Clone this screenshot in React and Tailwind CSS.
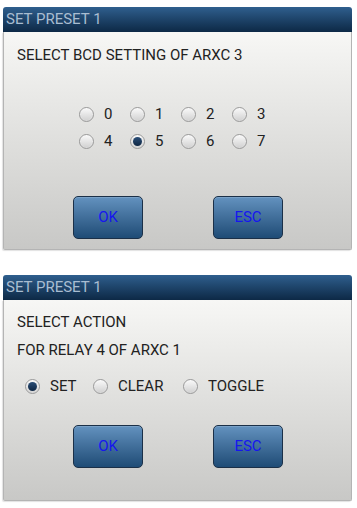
import React from "react";

const font = { fontFamily: "Roboto, 'Liberation Sans', sans-serif" };

function Radio({ checked }) {
  return (
    <span className="relative flex h-[15px] w-[15px] shrink-0 items-center justify-center rounded-full border border-[#999] bg-gradient-to-b from-[#fafafa] to-[#d0d0d0] shadow-[inset_0_0_1px_#ffffff]">
      {checked ? (
        <span className="h-[9px] w-[9px] rounded-full bg-gradient-to-b from-[#2b4f78] to-[#0f2744]" />
      ) : null}
    </span>
  );
}

function Opt({ label, checked }) {
  return (
    <div className="flex items-center gap-[10px]">
      <Radio checked={checked} />
      <span className="text-[15px] leading-none text-[#222]">{label}</span>
    </div>
  );
}

function Btn({ children }) {
  return (
    <div className="flex h-[43px] w-[70px] items-center justify-center rounded-[5px] border border-[#1b3048] bg-gradient-to-b from-[#6392bf] to-[#1f4c76] text-[15px] text-[#1616ee] shadow-[inset_0_1px_0_rgba(255,255,255,0.15)]">
      {children}
    </div>
  );
}

function Title() {
  return (
    <div className="flex h-[25px] items-center rounded-t-[3px] bg-gradient-to-b from-[#2f5f8e] to-[#0d2946] pl-[3px] text-[15px] text-[#a9bdd1]">
      SET PRESET 1
    </div>
  );
}

export default function App() {
  return (
    <div className="h-[508px] w-[357px] bg-white px-[3px] pt-[7px]" style={font}>
      <div className="w-[349px]">
        <Title />
        <div className="flex h-[218px] flex-col rounded-b-[2px] border border-t-0 border-[#b4b4b4] bg-gradient-to-b from-[#f7f7f5] to-[#c8c8c6] shadow-[-1px_1px_1px_rgba(0,0,0,0.12)]">
          <div className="mt-[14px] pl-[13px] text-[15px] leading-[18px] text-[#222]">
            SELECT BCD SETTING OF ARXC 3
          </div>
          <div className="ml-[75px] mt-[37px] grid grid-cols-[51px_51px_51px_51px] grid-rows-[27px_27px] items-center">
            <Opt label="0" />
            <Opt label="1" />
            <Opt label="2" />
            <Opt label="3" />
            <Opt label="4" />
            <Opt label="5" checked />
            <Opt label="6" />
            <Opt label="7" />
          </div>
          <div className="ml-[69px] mt-[41px] flex gap-[70px]">
            <Btn>OK</Btn>
            <Btn>ESC</Btn>
          </div>
        </div>
      </div>

      <div className="mt-[25px] w-[349px]">
        <Title />
        <div className="flex h-[201px] flex-col rounded-b-[2px] border border-t-0 border-[#b4b4b4] bg-gradient-to-b from-[#f7f7f5] to-[#c8c8c6] shadow-[-1px_1px_1px_rgba(0,0,0,0.12)]">
          <div className="mt-[13px] pl-[13px] text-[15px] leading-[18px] text-[#222]">
            SELECT ACTION
          </div>
          <div className="mt-[10px] pl-[13px] text-[15px] leading-[18px] text-[#222]">
            FOR RELAY 4 OF ARXC 1
          </div>
          <div className="ml-[21px] mt-[18px] flex h-[18px] items-center">
            <div className="w-[68px]"><Opt label="SET" checked /></div>
            <div className="w-[90px]"><Opt label="CLEAR" /></div>
            <Opt label="TOGGLE" />
          </div>
          <div className="ml-[69px] mt-[30px] flex gap-[70px]">
            <Btn>OK</Btn>
            <Btn>ESC</Btn>
          </div>
        </div>
      </div>
    </div>
  );
}
